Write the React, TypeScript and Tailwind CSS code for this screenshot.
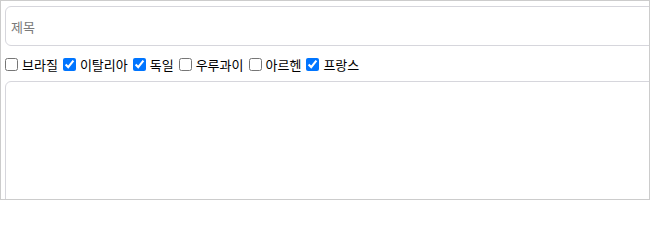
import { useState } from "react"

const Countries = [
  { name: "브라질", checked: false },
  { name: "이탈리아", checked: true },
  { name: "독일", checked: true },
  { name: "우루과이", checked: false },
  { name: "아르헨", checked: false },
  { name: "프랑스", checked: true },
]

export default function App() {
  const [title, setTitle] = useState("")

  return (
    <div
      className="w-[650px] h-[200px] border border-[#cccccc] overflow-hidden pl-1 pt-[5px] bg-white text-[13px] text-black"
      style={{ fontFamily: '"Noto Sans CJK KR", "Noto Sans", sans-serif' }}
    >
      {/* Title */}
      <input
        type="text"
        value={title}
        onChange={(e) => setTitle(e.target.value)}
        placeholder="제목"
        className="block w-[700px] h-10 border border-[#d6d6dc] rounded-md px-[5px] outline-none placeholder:text-[#7a7a7a]"
      />
      {/* Countries */}
      <div className="flex items-center h-[21px] mt-[8px] gap-[5px]">
        {Countries.map((c) => (
          <label key={c.name} className="flex items-center gap-[4px] leading-none">
            <input type="checkbox" defaultChecked={c.checked} className="m-0 w-[13px] h-[13px]" />
            <span>{c.name}</span>
          </label>
        ))}
      </div>
      {/* Body */}
      <textarea className="block w-[700px] h-[200px] mt-[6px] border border-[#d6d6dc] rounded-md outline-none resize-none" />
    </div>
  )
}
